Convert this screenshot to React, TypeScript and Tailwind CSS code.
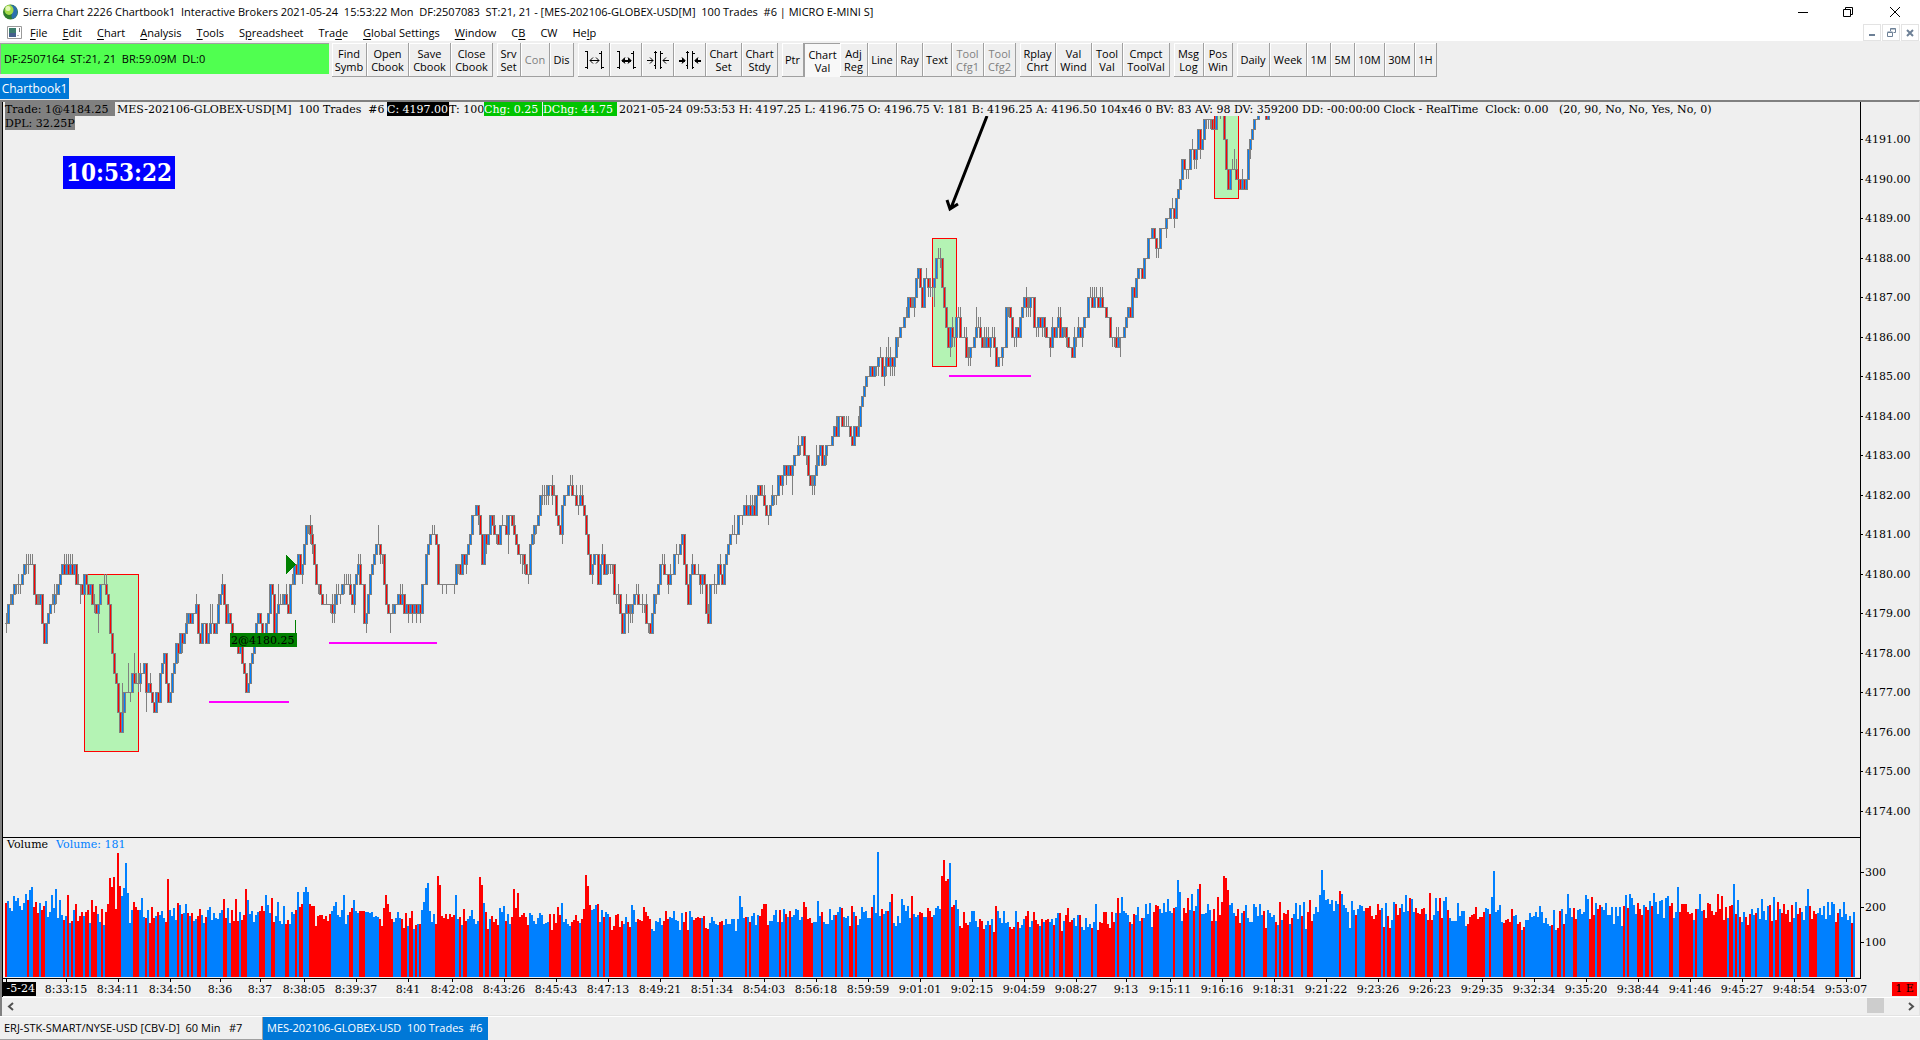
// src/App.tsx

import React from 'react';

const BLUE = '#0080ff';
const RED = '#ff0000';
const GRAY = '#808080';

// Closing levels in quarter points above 4176.00, one token per 100-trade bar.
// "+n" and "-n" give the wick above and below the body.
const CLOSES = `
11+1-1 13 13+1 14 15 15-1 15+1-1 15-1 16 17 17+1-1 17+1-1 17+1 17+1 14 13 13+1 14 11 9 11 12 13 13+1 14+1-1 14+1-1
15 16 17 16+1 17+1 16+1 17+1 16+1 17 15 15+1 15-2 14 16 15 14 15 13 13+1-1 12 13-2 15 15 15+1 14+1 13 10 8 6 5 2 0
2+3 4 4 4+3 4-1 6 5+2 5+1 5+1-1 6+1-1 6 7 4-2 5 4+1 3 2 4 3 6 7 8 5 3 4 6 7 9 8-1 10 9-1 10 11+1 12 11 12 12 13+1
10 9 11 11 9 10 11+2 11+2 10 11 13+1 14 15+1 13 11 12+1 11 10 9 9 8 9 7 6 4 5 7 8 10 11 12 11 10 10 11 12 15 14 10
12 13+2 13+1 13+1 14 13+1 12 15 15+1 17 16 18 16 17-1 19 21 21-1 20+1-1 19+1-1 17 15 15-1 14 13 13 13+1 13 13-1
12+1-1 13+1-1 14+1 14+1 14-1 15 15+1-1 15+1 15+1 14+1 13 15-1 16 17+1 15+1 15 11 12-1 14 16 17 18 19 19+2 18-1
18-1 15 13 12 12-2 12+1 13 13 14 13+1 14+1 12 13 12-1 13 12-1 13 12-1 13 12-1 15 15 18 19 20 20+1 20+1 19 15 15 15-1
15 15-1 15 15 15 15-1 17 17-1 16 18 17 18-1 19 20 22 22 23 22-1 20 17 20 19-1 20 22 21 20+1 20-1 19 21 21+1 21 20+1
22-2 22 21 20+1 19 18 18-1 18-2 17-1 16 16-1 19 20 21-1 21-1 22 24 24+1-1 24+1-1 24+1-1 25-1 25 24+1-1 24+1 22 21
20 23-1 24 24 25 25+1 24+1 24 23+1 23-1 24+1 23+1 22 20 18 16 17-1 18 18 15 17 18+1 16 17 17-1 17-1 17-1 14 14-1
14+1-1 12 10 12 13+1 12-2 12+1-1 13-1 14 14+1 13+1 13 13+1-1 13-1 11+1 11-1 10 12 14 14-1 15 17 17+1 16+1 16 15-1
16+1 16 18 18+1 18-1 19 20 17 15 13 16 17+1 16 16 16+1 15-1 16-1 15 12 11+1 15 15 15+1-1 15-1 17 16+1 15 17 18 19
20 20+1 20+2 20-1 22 22 22-1 23 22+1 23 22+1 23+1 22+1 24 25 24 24+1 23+1 22 22-1 23 24+1 24-1 24-1 26 25 26-1 27
26-1 27 26 27-2 28 28 29+1 29-1 30 28 28-1 26 25 25+1-1 26-1 27+2 28 29 27 28 29-1 29 29 30 31 30+1 32 32 31 31+1
31+1 31+1 30 29 31 30 31+1 33 34 35 36 36 37 36 37 37-1 38-1 38+1 36 37-1 38+1-1 37+2 38+1-1 37-1 38-1 40 40-1 41
41 42 42+1 44 43 43+1 44-1 46 47 45 43 46 46+1 45-1 45+1-1 45-1 46-2 48 48+1 48+1-1 45 43 41 39 41-1 40+1-1 40-1 42
42+1 40+1 40 40+1 38+1 38+1-1 39-1 39 40 41+2 41+1 40+1 39 39+2 40+1 39+1 40-1 40+1 39+1 37 38 38 39-1 39 43 43-1
42 40 40-1 41-1 40 42 43 44 43+1-1 43+1-1 44-1 44 41 41-1 42-1 41 42-1 41-1 40 40 39-1 41+1 40 41 42+1 40+1 41 41-1
40-1 39 39 38 40+1 40-1 41+1 40 41-1 42 42 44 44+1 43+1 44+1 44+1 43 44+1 43+1 43 42 42 40 40-1 40-1 39+1 40+1 40-2
40 41 42 43 42 45 44 46 47 47 46 48 48 50 50 51 50 49-1 49-1 51 51 51 52-1 52 53 53+1 52-1 54 55 56 58 57 57-1 57-1
59 59+1 58-1 59-1 61 59-1 60 62 62-1 62-1 62-1 61 61 63 63 63-1 63 60 57 55 57 57+1 57+2 56+1 56 55 56+1 55 56 59
60-1 61 62 62 63 63 63 63 62 63
`;

// Volume bar heights; "r" or "b" switches the colour for the bars that follow.
const VOLUMES = `
r74 b76 69 66 81 76 79 71 67 74 83 r77 b87 90 r70 75 64 b74 r67 71 b76 60 65 82 69 88 59 77 62 r57 b61 r82 b54 r56 b67
r73 56 61 65 b61 r65 67 b54 r77 65 71 b63 55 r68 b52 r65 73 99 90 100 68 124 91 b81 89 114 84 54 67 r75 70 67 b67 79 60
r59 b67 r54 70 59 b61 r65 b62 66 59 r55 98 b67 61 69 57 r74 b72 r63 b64 73 r64 b61 r64 b56 58 r61 68 b62 54 r60 b67 70 57
64 59 58 64 67 r78 59 b69 54 r67 56 78 56 b65 r57 62 88 b77 63 66 55 62 65 r66 71 66 b82 72 64 r79 55 b61 75 56 53 71
r53 57 b53 65 63 r67 b85 r70 73 b85 90 85 r73 71 71 51 61 62 62 58 61 56 63 b66 71 75 62 60 67 82 53 62 r65 69 b77 66 64
r66 66 66 b65 65 64 65 60 61 60 r58 51 69 82 73 65 58 b55 59 65 59 r58 49 64 b51 r59 66 b48 r52 b53 r53 b67 75 89 94 66
55 63 r53 101 92 61 59 63 58 63 60 62 b82 58 r60 b52 r68 56 b58 61 67 58 53 56 r100
92 b74 r65 48 b58 r61 55 58 52 b69 65 71 r56 b63 53 r60 88 69 84 60 62 64 60 52 b64 62 56 53 59 64 62 53 54 55 r63 47 63
54 70 62 b74 55 58 53 51 r55 57 62 56 b54 r58 68 102 91 72 b67 68 72 r73 b55 67 r60 b65 63 r60 47 51 62 63 50 56 b53 60
r55 50 b72 67 55 r58 57 56 70 65 61 58 b48 46 56 55 59 52 r56 66 58 b60 59 66 57 56 47 64 r55 65 47 b66 60 r57 59 60 59
b59 r61 49 48 b54 60 56 53 52 r55 56 b52 58 53 53 58 58 46 58 81 70 59 r60 b60 r55 b61 64 52 62 r61 68 73 73 52 b56 56
62 67 55 r67 b55 68 r63 b60 r66 b60 62 68 67 57 60 r75 70 58 59 54 b55 55 76 61 r65 b55 53 53 68 57 62 r62 b65 70 r69
b60 59 61 r51 71 b65 r61 b52 58 70 65 66 59 59 r70 b82 64 125 61 r68 b63 66 r66 b75 r83 b54 51 61 54 78 72 66 71 59 r81
b63 60 62 r65 64 b60 60 r69 66 60 b62 69 71 68 r101 117 96 98 b114 r70 72 b77 68 r51
49 65 54 52 b55 66 66 56 50 r58 56 48 b52 56 r52 b58 r45 71 b66 59 54 66 54 55 r50 48 50 b66 r55 b49 52 58 r61 66 b50 56
r65 57 53 b51 r58 b55 r57 58 b55 58 r52 b59 64 r64 46 b56 r62 69 55 57 b59 51 62 r62 b50 47 59 50 53 r49 b55 73 r47 55 54
65 65 53 49 65 55 b64 r79 b64 80 66 64 62 r55 b53 r63 b62 70 56 r59 b59 73 63 74 50 r65 72 71 b68 64 74 65 78 66 64 r69
b70 97 85 56 r69 64 79 b67 83 r66 b71 88 r93 b63 63 64 73 67 r56 68 b56 r80 62 75 101 99 87 b72 74 64 r61 68 54 b64 r66
b72 59 55 55 73 70 61 73 62 r66 49 b67 64 60 62 r55 b52 r75 b57 r64 63 67 b53 r59 b63 74 58 72 r61 b75 48 r65 77 56 b63
70 65 82 107 87 77 78 73 77 66 76 73 r86 b83 72 69 65 49 76 67 r62 b68 72 71 66 r69 69 71 61 58 62 73 67 b69 r50 b74 r61
49 b57 75 r73 62 69 b73 65 82 66 r79 b78 65 r69 64 63 68 69 b63 r57 84 57 b62 79 66 r79
59 b76 80 r67 b59 56 56 56 74 61 66 66 51 r53 60 62 63 70 58 60 60 65 b69 68 r63 b80 106 65 67 72 55 r54 57 58 55 68 b61
62 r53 55 b47 r50 b57 57 64 60 61 65 60 71 65 54 59 53 51 r52 b67 47 r49 66 b68 r53 b63 83 69 60 r69 58 b67 68 63 65 82
78 r58 80 62 b74 r68 72 b70 67 74 62 62 70 53 70 61 70 51 r71 b82 r69 b83 79 72 63 r74 68 62 b72 r70 67 b76 r71 b84 75
63 76 77 59 79 81 r71 74 b59 65 90 r65 73 73 73 65 63 64 b57 r68 b68 83 66 r67 59 74 73 66 62 65 83 68 81 57 70 b59 r71
72 b93 r63 b77 r60 b55 65 r60 52 63 b68 62 r64 b69 58 78 66 57 71 r72 56 b80 r57 75 b68 r64 73 63 67 55 72 b59 75 r63 69
b65 57 71 88 r71 58 66 63 b64 69 62 71 58 75 62 75 73 r55 64 b68 60 75 63 57 61 r54 b65
`;

const TIMES: [number, string][] = [
  [66, '8:33:15'], [118, '8:34:11'], [170, '8:34:50'], [220, '8:36'], [260, '8:37'], [304, '8:38:05'],
  [356, '8:39:37'], [408, '8:41'], [452, '8:42:08'], [504, '8:43:26'], [556, '8:45:43'], [608, '8:47:13'],
  [660, '8:49:21'], [712, '8:51:34'], [764, '8:54:03'], [816, '8:56:18'], [868, '8:59:59'], [920, '9:01:01'],
  [972, '9:02:15'], [1024, '9:04:59'], [1076, '9:08:27'], [1126, '9:13'], [1170, '9:15:11'], [1222, '9:16:16'],
  [1274, '9:18:31'], [1326, '9:21:22'], [1378, '9:23:26'], [1430, '9:26:23'], [1482, '9:29:35'], [1534, '9:32:34'],
  [1586, '9:35:20'], [1638, '9:38:44'], [1690, '9:41:46'], [1742, '9:45:27'], [1794, '9:48:54'], [1846, '9:53:07'],
];

// Menu entries as [before, accelerator, after]
const MENUS = [
  ['', 'F', 'ile'], ['', 'E', 'dit'], ['', 'C', 'hart'], ['', 'A', 'nalysis'], ['', 'T', 'ools'],
  ['S', 'p', 'readsheet'], ['Tra', 'd', 'e'], ['', 'G', 'lobal Settings'], ['', 'W', 'indow'],
  ['C', 'B', ''], ['CW', '', ''], ['He', 'l', 'p'],
];

interface ToolButton {
  lines: string[];
  width: string;
  icon?: 'wide' | 'wideBold' | 'narrow' | 'narrowBold';
  disabled?: boolean;
  pressed?: boolean;
}

const TOOLBAR: ToolButton[][] = [
  [
    {lines: ['Find', 'Symb'], width: 'w-[35px]'},
    {lines: ['Open', 'Cbook'], width: 'w-[42px]'},
    {lines: ['Save', 'Cbook'], width: 'w-[42px]'},
    {lines: ['Close', 'Cbook'], width: 'w-[42px]'},
  ],
  [
    {lines: ['Srv', 'Set'], width: 'w-[24px]'},
    {lines: ['Con'], width: 'w-[29px]', disabled: true},
    {lines: ['Dis'], width: 'w-[24px]'},
  ],
  [
    {lines: [], width: 'w-[32px]', icon: 'wide'},
    {lines: [], width: 'w-[32px]', icon: 'wideBold'},
    {lines: [], width: 'w-[32px]', icon: 'narrow'},
    {lines: [], width: 'w-[32px]', icon: 'narrowBold'},
    {lines: ['Chart', 'Set'], width: 'w-[36px]'},
    {lines: ['Chart', 'Stdy'], width: 'w-[36px]'},
  ],
  [
    {lines: ['Ptr'], width: 'w-[22px]'},
    {lines: ['Chart', 'Val'], width: 'w-[36px]', pressed: true},
    {lines: ['Adj', 'Reg'], width: 'w-[28px]'},
    {lines: ['Line'], width: 'w-[29px]'},
    {lines: ['Ray'], width: 'w-[26px]'},
    {lines: ['Text'], width: 'w-[29px]'},
    {lines: ['Tool', 'Cfg1'], width: 'w-[32px]', disabled: true},
    {lines: ['Tool', 'Cfg2'], width: 'w-[32px]', disabled: true},
  ],
  [
    {lines: ['Rplay', 'Chrt'], width: 'w-[36px]'},
    {lines: ['Val', 'Wind'], width: 'w-[36px]'},
    {lines: ['Tool', 'Val'], width: 'w-[31px]'},
    {lines: ['Cmpct', 'ToolVal'], width: 'w-[47px]'},
  ],
  [
    {lines: ['Msg', 'Log'], width: 'w-[30px]'},
    {lines: ['Pos', 'Win'], width: 'w-[29px]'},
  ],
  [
    {lines: ['Daily'], width: 'w-[33px]'},
    {lines: ['Week'], width: 'w-[37px]'},
    {lines: ['1M'], width: 'w-[24px]'},
    {lines: ['5M'], width: 'w-[24px]'},
    {lines: ['10M'], width: 'w-[30px]'},
    {lines: ['30M'], width: 'w-[30px]'},
    {lines: ['1H'], width: 'w-[22px]'},
  ],
];

function parseCandles() {
  let previous = 11;
  return CLOSES.trim()
    .split(/\s+/)
    .map((token) => {
      const close = parseInt(token, 10);
      const up = Number(/\+(\d+)/.exec(token)?.[1] ?? 0);
      const down = Number(/-(\d+)/.exec(token)?.[1] ?? 0);
      const open = previous;
      previous = close;
      return {open, close, high: Math.max(open, close) + up, low: Math.min(open, close) - down};
    });
}

function parseVolumes() {
  let color = RED;
  return VOLUMES.trim()
    .split(/\s+/)
    .map((token) => {
      if (token[0] === 'r') color = RED;
      if (token[0] === 'b') color = BLUE;
      return {color, height: Number(token.replace(/[rb]/, ''))};
    });
}

const candles = parseCandles();
const volumes = parseVolumes();

// y of a level inside the price pane
const levelY = (level: number) => Math.round(616 - level * 9.88);

function SpacingIcon({kind}: {kind: NonNullable<ToolButton['icon']>}) {
  const bold = kind === 'wideBold' || kind === 'narrowBold';
  const head = bold ? '#000' : 'none';
  if (kind === 'wide' || kind === 'wideBold') {
    return (
      <svg width="20" height="20" viewBox="0 0 20 20" fill="none" stroke="#000" shapeRendering="crispEdges">
        <path d="M1 1.5h3M3.5 1v18M1 17.5h3M17.5 1v18M15 3.5h3M17 17.5h3" />
        <path d="M6 10.5h9" strokeWidth={bold ? 2 : 1} />
        <path d="M9 7.5L6 10.5l3 3M12 7.5l3 3-3 3" fill={head} shapeRendering="auto" />
      </svg>
    );
  }
  return (
    <svg width="22" height="20" viewBox="0 0 22 20" fill="none" stroke="#000" shapeRendering="crispEdges">
      <path d="M7 2.5h3M8.5 1v18M7 15.5h2M13.5 1v18M13 3.5h3M13 17.5h2" />
      <path d="M0 10.5h6M16 10.5h6" strokeWidth={bold ? 2 : 1} />
      <path d="M3 7.5l3 3-3 3M19 7.5l-3 3 3 3" fill={head} shapeRendering="auto" />
    </svg>
  );
}

function ToolbarButton({button}: {button: ToolButton}) {
  const tone = button.disabled ? 'text-[#808080]' : 'text-black';
  const surface = button.pressed
    ? 'bg-[#f8f8f8] border-l border-t border-[#a0a0a0]'
    : 'border-r border-b border-r-[#a0a0a0] border-b-[#a0a0a0] shadow-[inset_1px_1px_0_#fff]';
  return (
    <button
      type="button"
      disabled={button.disabled}
      aria-label={button.icon}
      className={`flex h-[34px] flex-col items-center justify-center whitespace-nowrap text-[11px] leading-[13px] ${button.width} ${tone} ${surface}`}
    >
      {button.icon && <SpacingIcon kind={button.icon} />}
      {button.lines.map((line) => (
        <span key={line}>{line}</span>
      ))}
    </button>
  );
}

function TitleBar() {
  return (
    <header className="flex h-6 items-center bg-white pl-[3px]">
      <svg width="15" height="17" viewBox="0 0 15 17">
        <circle cx="7.5" cy="8" r="7.5" fill="#2f7d2b" />
        <path d="M8 1c4 0 6.500 3 6.500 7s-3 7-5 7c-2-3 0-5-1-7s-3-3-.5-7z" fill="#2c6fae" />
        <ellipse cx="6" cy="6" rx="4.500" ry="5" fill="#a5dc4a" />
        <ellipse cx="5" cy="4.500" rx="2.500" ry="2.500" fill="#e3f7b8" />
      </svg>
      <h1 className="ml-[5px] whitespace-pre text-[11px]">
        {'Sierra Chart 2226 Chartbook1  Interactive Brokers 2021-05-24  15:53:22 Mon  DF:2507083  ST:21, 21 - [MES-202106-GLOBEX-USD[M]  100 Trades  #6 | MICRO E-MINI S]'}
      </h1>
      <div className="ml-auto flex">
        <button type="button" aria-label="Minimize" className="flex w-[46px] justify-center">
          <svg width="10" height="10" stroke="#000"><path d="M0 5.500h10" /></svg>
        </button>
        <button type="button" aria-label="Restore" className="flex w-[44px] justify-center">
          <svg width="10" height="10" fill="none" stroke="#000"><path d="M.5 2.500h7v7h-7zM2.500 2.500v-2h7v7h-2" /></svg>
        </button>
        <button type="button" aria-label="Close" className="flex w-[50px] justify-center">
          <svg width="10" height="10" stroke="#000"><path d="M0 0l10 10M10 0L0 10" /></svg>
        </button>
      </div>
    </header>
  );
}

function MenuBar() {
  return (
    <nav className="flex h-[17px] items-center bg-white pl-[7px] text-[11px]">
      <svg width="15" height="13" viewBox="0 0 15 13">
        <path d="M.5.500h14v12H.5z" fill="#fff" stroke="#9a9a9a" />
        <path d="M2 2h7v9H2z" fill="#3c7d6c" />
        <path d="M2 7h7v4H2z" fill="#45608c" />
        <path d="M10.500 9.500h1M12.500 2v4" stroke="#777" />
      </svg>
      <div className="ml-2 flex gap-[15px]">
        {MENUS.map(([before, key, after]) => (
          <button type="button" key={before + key + after} className="leading-4">
            {before}
            <span className="underline underline-offset-2">{key}</span>
            {after}
          </button>
        ))}
      </div>
      <div className="ml-auto flex gap-px pr-px">
        <button type="button" aria-label="Minimize chart" className="flex h-[17px] w-[18px] items-center justify-center border border-[#e3e3e3]">
          <svg width="8" height="8"><path d="M1 6h6" stroke="#6d8096" strokeWidth="2" /></svg>
        </button>
        <button type="button" aria-label="Restore chart" className="flex h-[17px] w-[18px] items-center justify-center border border-[#e3e3e3]">
          <svg width="9" height="9" fill="none" stroke="#6d8096"><path d="M.5 4.500h5v4h-5zM.5 4h5M3.500 3V.5h5v4H6.500M3.500 1h5" /></svg>
        </button>
        <button type="button" aria-label="Close chart" className="flex h-[17px] w-[18px] items-center justify-center border border-[#e3e3e3]">
          <svg width="8" height="8"><path d="M1 1l6 6M7 1L1 7" stroke="#6d8096" strokeWidth="2" /></svg>
        </button>
      </div>
    </nav>
  );
}

function Toolbar() {
  return (
    <div className="flex h-9 items-start pt-[2px]">
      <div className="flex h-[31px] w-[329px] items-center border-t border-l border-[#a0a0a0] bg-[#50ff50] pl-[3px] text-[11px] whitespace-pre">
        {'DF:2507164  ST:21, 21  BR:59.09M  DL:0'}
      </div>
      <div className="ml-[3px] flex gap-1">
        {TOOLBAR.map((group, index) => (
          <div key={index} className="flex">
            {group.map((button, i) => (
              <ToolbarButton key={i} button={button} />
            ))}
          </div>
        ))}
      </div>
    </div>
  );
}

function ChartHeader() {
  return (
    <div className="flex h-[14px] pl-[2px] text-[11px] leading-4 whitespace-pre">
      <span className="w-[110px] bg-[#808080]">Trade: 1@4184.25</span>
      <span className="ml-[2px] w-[270px]">{'MES-202106-GLOBEX-USD[M]  100 Trades  #6'}</span>
      <span className="w-[62px] bg-black text-white">C: 4197.00</span>
      <span className="w-[35px]">T: 100</span>
      <span className="w-[58px] bg-[#00c400] text-white">Chg: 0.25</span>
      <span className="ml-px w-[74px] bg-[#00c400] text-white">DChg: 44.75</span>
      <span className="ml-[2px]">
        {'2021-05-24 09:53:53 H: 4197.25 L: 4196.75 O: 4196.75 V: 181 B: 4196.25 A: 4196.50 104x46 0 BV: 83 AV: 98 DV: 359200 DD: -00:00:00 Clock - RealTime  Clock: 0.00   (20, 90, No, No, Yes, No, 0)'}
      </span>
    </div>
  );
}

function PriceChart() {
  return (
    <svg className="block h-full w-full" shapeRendering="crispEdges">
      {/* Highlighted legs */}
      <g fill="#b4f3b4" stroke={RED}>
        <rect x="81.500" y="458.500" width="54" height="177" />
        <rect x="929.500" y="122.500" width="24" height="128" />
        <rect x="1211.500" y="-20.500" width="24" height="103" />
      </g>

      {/* Candles */}
      {candles.map((candle, i) => {
        const x = 3 + i * 2;
        const top = levelY(Math.max(candle.open, candle.close));
        const bottom = levelY(Math.min(candle.open, candle.close));
        return (
          <g key={i}>
            <path d={`M${x + 0.5} ${levelY(candle.high)}V${levelY(candle.low)}`} stroke={GRAY} />
            <rect x={x - 1} y={top} width="3" height={bottom - top + 1} fill={GRAY} />
          </g>
        );
      })}
      {candles.map((candle, i) => {
        if (candle.open === candle.close) return null;
        const top = levelY(Math.max(candle.open, candle.close));
        const bottom = levelY(Math.min(candle.open, candle.close));
        return (
          <rect
            key={i}
            x={3 + i * 2}
            y={top + 1}
            width="1"
            height={bottom - top - 1}
            fill={candle.close > candle.open ? BLUE : RED}
          />
        );
      })}

      {/* Support lines */}
      <path d="M206 586h80M326 527h108M946 260h82" stroke="#ff00ff" strokeWidth="2" />

      {/* Trade marker */}
      <path d="M283 439v19l10-9.500zM292 504h1v14h-1z" fill="#008000" />
      <rect x="227" y="517" width="67" height="14" fill="#008000" />
      <text x="228" y="528" fontSize="11">2@4180.25</text>

      <path d="M984 0L948 92M944 84l3 9 8-5" fill="none" stroke="#000" strokeWidth="3" shapeRendering="auto" />
    </svg>
  );
}

function PriceAxis() {
  const prices = Array.from({length: 18}, (_, i) => 4191 - i);
  return (
    <svg className="block h-full w-full" fontSize="11">
      {prices.map((price, i) => (
        <g key={price}>
          <path d={`M0 ${Math.round(37 + i * 39.5) + 0.5}h2`} stroke="#000" />
          <text x="4" y={Math.round(41 + i * 39.5)}>{price}.00</text>
        </g>
      ))}
    </svg>
  );
}

function VolumePane() {
  return (
    <div className="flex h-[141px]">
      <div className="relative min-w-0 flex-1 border-t border-r border-black">
        <svg className="block h-full w-full" shapeRendering="crispEdges">
          {volumes.map((volume, i) => (
            <rect key={i} x={2 + i * 2} y={139 - volume.height} width="2" height={volume.height} fill={volume.color} />
          ))}
        </svg>
        <p className="absolute top-0 left-1 flex gap-2 text-[11px] leading-[14px]">
          <span>Volume</span>
          <span className="text-[#0080ff]">Volume: 181</span>
        </p>
      </div>
      <svg className="block h-full w-[58px]" fontSize="11">
        {[300, 200, 100].map((value, i) => (
          <g key={value}>
            <path d={`M0 ${35.5 + i * 35}h3`} stroke="#000" />
            <text x="4" y={39 + i * 35}>{value}</text>
          </g>
        ))}
      </svg>
    </div>
  );
}

function TimeAxis() {
  return (
    <div className="relative flex h-[19px] text-[11px]">
      <div className="min-w-0 flex-1">
        <svg className="block h-full w-full overflow-visible" fontSize="11" textAnchor="middle">
          <line x1="0" y1="0.500" x2="100%" y2="0.500" stroke="#000" />
          <path d="M3.500 1v3" stroke="#000" />
          {TIMES.map(([x, label]) => (
            <g key={label}>
              <path d={`M${x - 2.5} 1v3`} stroke="#000" />
              <text x={x - 3} y="15">{label}</text>
            </g>
          ))}
        </svg>
      </div>
      <div className="w-[58px] pt-1 pr-[2px]">
        <span className="ml-auto block h-[14px] w-[25px] bg-[#ff0000] text-center leading-[14px]">1 E</span>
      </div>
      <span className="absolute top-1 left-0 h-[14px] w-[33px] bg-black pr-px text-right leading-[14px] whitespace-nowrap text-white">
        -5-24
      </span>
    </div>
  );
}

function ScrollBar() {
  return (
    <div className="flex h-[19px] items-center border-t border-b border-t-white border-b-[#e3e3e3] px-[2px]">
      <button type="button" aria-label="Scroll left" className="flex w-3 justify-center">
        <svg width="7" height="9" fill="none" stroke="#505050" strokeWidth="2"><path d="M6 1L2 4.500 6 8" /></svg>
      </button>
      <div className="flex h-full flex-1 justify-end pr-[21px]">
        <div className="h-[15px] w-[17px] bg-[#cdcdcd]" />
      </div>
      <button type="button" aria-label="Scroll right" className="flex w-3 justify-center">
        <svg width="7" height="9" fill="none" stroke="#505050" strokeWidth="2"><path d="M1 1l4 3.500L1 8" /></svg>
      </button>
    </div>
  );
}

function App() {
  return (
    <div className="flex h-screen flex-col overflow-hidden bg-[#efefef] font-['Open_Sans','Noto_Sans',sans-serif] text-black">
      <TitleBar />
      <MenuBar />
      <Toolbar />

      {/* Chartbook tabs */}
      <div className="flex h-[23px] items-start pt-px">
        <button type="button" className="h-[21px] w-[69px] bg-[#0078d7] text-xs text-white">
          Chartbook1
        </button>
      </div>

      {/* Chart window */}
      <main className="flex min-h-0 flex-1 flex-col border-t-2 border-r border-l-2 border-t-[#808080] border-r-[#e3e3e3] border-l-[#808080] font-['DejaVu_Serif',serif]">
        <div className="flex min-h-0 flex-1 flex-col border-l border-black">
          <div className="flex min-h-0 flex-1">
            <div className="flex min-w-0 flex-1 flex-col border-r border-black">
              <ChartHeader />
              <div className="relative min-h-0 flex-1">
                <PriceChart />
                <span className="absolute top-0 left-[2px] h-[14px] w-[70px] bg-[#808080] text-[11px] leading-4 whitespace-nowrap">
                  DPL: 32.25P
                </span>
                <time className="absolute top-[40px] left-[60px] flex h-[33px] w-[112px] items-center justify-center bg-[#0000ff] font-['DejaVu_Serif_Condensed','DejaVu_Serif',serif] text-2xl font-bold text-white">
                  10:53:22
                </time>
              </div>
            </div>
            <div className="w-[58px]">
              <PriceAxis />
            </div>
          </div>
          <VolumePane />
          <TimeAxis />
        </div>
        <ScrollBar />
      </main>

      {/* Chart tabs */}
      <footer className="flex h-6 items-stretch border-t border-white text-[11px] whitespace-pre">
        <button type="button" className="w-[263px] border-r border-b border-[#a0a0a0] pl-1 text-left">
          {'ERJ-STK-SMART/NYSE-USD [CBV-D]  60 Min   #7'}
        </button>
        <button type="button" className="w-[225px] bg-[#0078d7] pl-1 text-left text-white">
          {'MES-202106-GLOBEX-USD  100 Trades  #6'}
        </button>
      </footer>
    </div>
  );
}

export default App;
